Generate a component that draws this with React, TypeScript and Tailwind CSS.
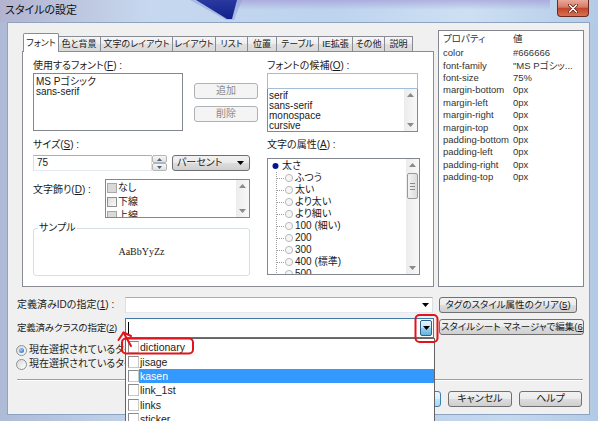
import React from "react";

const U = ({ children }: { children: React.ReactNode }) => (
  <span className="underline underline-offset-[1px] decoration-[1px]">{children}</span>
);

const Down = ({ c = "#000" }: { c?: string }) => (
  <svg width="7" height="4" viewBox="0 0 7 4">
    <path d="M0 0H7L3.5 4Z" fill={c} />
  </svg>
);
const Up = ({ c = "#000" }: { c?: string }) => (
  <svg width="7" height="4" viewBox="0 0 7 4">
    <path d="M0 4H7L3.5 0Z" fill={c} />
  </svg>
);

const btn =
  "flex items-center justify-center rounded-[3px] border border-[#707070] bg-[linear-gradient(#f2f2f2,#ebebeb_50%,#dddddd_50%,#cfcfcf)] leading-[12px] text-[#1a1a1a] shrink-0 whitespace-nowrap";
const dbtn =
  "flex items-center justify-center rounded-[3px] border border-[#adb2b5] bg-[#f4f4f4] text-[10px] leading-[12px] text-[#8a8a8a] shrink-0";
const tbox = "border border-[#abadb3] border-l-[#dbdfe6] border-r-[#dbdfe6] border-b-[#e3e9ef] bg-white";

function Scroll({ thumb = false }: { thumb?: boolean }) {
  return (
    <div className="w-[13px] shrink-0 self-stretch flex flex-col bg-[linear-gradient(90deg,#ececec,#f8f8f8)]">
      <div className="h-[12px] flex items-center justify-center">
        <Up c="#8a8a8a" />
      </div>
      {thumb && (
        <div className="mt-[2px] mx-[1px] h-[26px] rounded-[2px] border border-[#9a9a9a] bg-[linear-gradient(90deg,#f3f3f3,#dcdcdc)] flex flex-col items-center justify-center gap-[2px]">
          <div className="w-[5px] h-px bg-[#8a8a8a]" />
          <div className="w-[5px] h-px bg-[#8a8a8a]" />
          <div className="w-[5px] h-px bg-[#8a8a8a]" />
        </div>
      )}
      <div className="flex-1" />
      <div className="h-[12px] flex items-center justify-center">
        <Down c="#8a8a8a" />
      </div>
    </div>
  );
}

const Check = ({ gray = false }: { gray?: boolean }) => (
  <div
    className={
      gray
        ? "w-[10px] h-[10px] shrink-0 border border-[#a8a8a8] bg-[#d9d9d9]"
        : "w-[10px] h-[10px] shrink-0 border border-[#8e8f8f] bg-[linear-gradient(135deg,#dcdcdc,#fafafa)]"
    }
  />
);

const Radio = ({ on = false }: { on?: boolean }) => (
  <div className="w-[11px] h-[11px] shrink-0 rounded-full border border-[#8e8f8f] bg-[linear-gradient(135deg,#d8d8d8,#ffffff)] flex items-center justify-center">
    {on && <div className="w-[5px] h-[5px] rounded-full bg-[radial-gradient(circle_at_35%_35%,#9fd0ff,#1b5fb5)]" />}
  </div>
);

const TreeChild = ({ t }: { t: string }) => (
  <div className="h-[12px] flex items-center">
    <svg width="27" height="12" viewBox="0 0 27 12" className="shrink-0">
      <line x1="8.5" y1="0" x2="8.5" y2="12" stroke="#a0a0a0" strokeDasharray="1 1" />
      <line x1="9" y1="6.5" x2="17" y2="6.5" stroke="#a0a0a0" strokeDasharray="1 1" />
      <circle cx="21" cy="6" r="3.6" fill="#f6f6f6" stroke="#b9b9b9" />
    </svg>
    <span className="text-[10px] leading-[12px]">{t}</span>
  </div>
);

const tabs: [string, string][] = [
  ["色と背景", "w-[43px]"],
  ["文字のレイアウト", "w-[72px]"],
  ["レイアウト", "w-[43px]"],
  ["リスト", "w-[32px]"],
  ["位置", "w-[29px]"],
  ["テーブル", "w-[42px]"],
  ["IE拡張", "w-[34px]"],
  ["その他", "w-[32px]"],
  ["説明", "w-[29px] border-r"],
];

const props: [string, string][] = [
  ["color", "#666666"],
  ["font-family", "\"MS Pゴシッ..."],
  ["font-size", "75%"],
  ["margin-bottom", "0px"],
  ["margin-left", "0px"],
  ["margin-right", "0px"],
  ["margin-top", "0px"],
  ["padding-bottom", "0px"],
  ["padding-left", "0px"],
  ["padding-right", "0px"],
  ["padding-top", "0px"],
];

const classes = ["dictionary", "jisage", "kasen", "link_1st", "links", "sticker"];

export default function App() {
  return (
    <div className="relative w-[598px] h-[421px] overflow-hidden font-['Liberation_Sans','Noto_Sans_CJK_JP',sans-serif] [font-feature-settings:'palt'] text-[#1a1a1a] bg-[linear-gradient(90deg,#aebbd6,#c3d6ee_25%,#b9cfeb_60%,#c4d8ef_85%,#b3cae6)]">
      {/* title bar */}
      <div className="relative h-[22px] flex items-start">
        <svg className="absolute left-0 top-0" width="598" height="22" viewBox="0 0 598 22">
          <defs>
            <linearGradient id="tb" x1="0" y1="0" x2="1" y2="0">
              <stop offset="0" stopColor="#b2b3cf" />
              <stop offset="0.25" stopColor="#c6d8ef" />
              <stop offset="0.55" stopColor="#bdd3ee" />
              <stop offset="0.78" stopColor="#cde0f3" />
              <stop offset="1" stopColor="#b4cbe8" />
            </linearGradient>
            <linearGradient id="tp" x1="0" y1="0" x2="0" y2="1">
              <stop offset="0" stopColor="#9d92d2" stopOpacity="0.6" />
              <stop offset="1" stopColor="#9d92d2" stopOpacity="0" />
            </linearGradient>
            <linearGradient id="nv" x1="0" y1="0" x2="0" y2="1">
              <stop offset="0" stopColor="#2a38a0" />
              <stop offset="1" stopColor="#12208a" />
            </linearGradient>
          </defs>
          <rect width="598" height="22" fill="url(#tb)" />
          <rect x="220" y="0" width="330" height="10" fill="url(#tp)" />
          <polygon points="190,0 242,0 234,20 226,20" fill="#8aa0d8" opacity="0.5" />
          <polygon points="196,0 237,0 232,19 227,19" fill="url(#nv)" />
        </svg>
        <span className="relative ml-[5px] mt-[3px] text-[11px] leading-[15px] text-[#111]">スタイルの設定</span>
        <div className="relative ml-auto mr-[9px] w-[32px] h-[17px] rounded-b-[4px] border border-t-0 border-[#6b2a20] bg-[linear-gradient(#eaa999,#d47b66_45%,#c2442c_52%,#d9714f)] flex items-center justify-center">
          <svg width="10" height="9" viewBox="0 0 10 9">
            <path d="M1.5 1L8.5 8M8.5 1L1.5 8" stroke="#5a1a10" strokeWidth="3" strokeLinecap="round" />
            <path d="M1.5 1L8.5 8M8.5 1L1.5 8" stroke="#ffffff" strokeWidth="1.6" strokeLinecap="round" />
          </svg>
        </div>
      </div>

      {/* client area */}
      <div className="ml-[7px] w-[583px] h-[393px] border border-[#8ea3c0] bg-[#f0f0f0] flex flex-col">
        {/* top section */}
        <div className="flex pt-[7px]">
          <div className="ml-[14px] pt-[3px] w-[412px] flex flex-col">
            <div className="flex items-end h-[18px] pl-[1px]">
              <div className="relative z-10 -mb-px -mr-[2px] h-[19px] w-[36px] shrink-0 rounded-t-[2px] border border-b-0 border-[#898c95] bg-white flex items-center justify-center text-[9px] leading-[12px]">
                フォント
              </div>
              {tabs.map(([t, w]) => (
                <div
                  key={t}
                  className={`${w} h-[15px] shrink-0 border-l border-t border-[#898c95] bg-[linear-gradient(#f6f6f6,#ececec_50%,#dfdfdf_50%,#d9d9d9)] flex items-center justify-center text-[9px] leading-[12px] whitespace-nowrap`}
                >
                  {t}
                </div>
              ))}
            </div>
            <div className="h-[236px] w-[412px] border border-[#898c95] bg-white flex pl-[10px]">
              {/* left column */}
              <div className="w-[217px] shrink-0 flex flex-col">
                <div className="mt-[8px] h-[12px] text-[10px] leading-[12px]">
                  使用するフォント(<U>F</U>) :
                </div>
                <div className="mt-[1px] flex">
                  <div className="w-[150px] h-[58px] shrink-0 border border-[#828790] pt-[3px] pl-[2px] text-[10px] leading-[10px]">
                    <div>MS Pゴシック</div>
                    <div>sans-serif</div>
                  </div>
                  <div className="ml-[11px] pt-[10px] flex flex-col gap-[7px]">
                    <div className={`${dbtn} w-[64px] h-[16px]`}>追加</div>
                    <div className={`${dbtn} w-[64px] h-[16px]`}>削除</div>
                  </div>
                </div>
                <div className="mt-[8px] h-[12px] text-[10px] leading-[12px]">
                  サイズ(<U>S</U>) :
                </div>
                <div className="mt-[4px] flex h-[16px]">
                  <div className={`${tbox} w-[119px] h-[16px] shrink-0 pl-[3px] text-[10px] leading-[14px]`}>75</div>
                  <div className="w-[15px] h-[16px] shrink-0 flex flex-col">
                    <div className="h-[8px] rounded-[2px] border border-[#b5b5b5] bg-[linear-gradient(#f7f7f7,#e0e0e0)] flex items-center justify-center">
                      <svg width="5" height="3" viewBox="0 0 5 3">
                        <path d="M0 3H5L2.5 0Z" fill="#4d6185" />
                      </svg>
                    </div>
                    <div className="h-[8px] rounded-[2px] border border-[#b5b5b5] bg-[linear-gradient(#f7f7f7,#e0e0e0)] flex items-center justify-center">
                      <svg width="5" height="3" viewBox="0 0 5 3">
                        <path d="M0 0H5L2.5 3Z" fill="#4d6185" />
                      </svg>
                    </div>
                  </div>
                  <div className={`${btn} ml-[5px] w-[78px] h-[16px] justify-start pl-[4px] pr-[5px] text-[10px]`}>
                    <span>パーセント</span>
                    <span className="ml-auto flex">
                      <Down />
                    </span>
                  </div>
                </div>
                <div className="mt-[8px] flex h-[39px]">
                  <div className="pt-[5px] text-[10px] leading-[12px]">
                    文字飾り(<U>D</U>) :
                  </div>
                  <div className="ml-auto w-[145px] h-[39px] shrink-0 border border-[#828790] flex overflow-hidden">
                    <div className="flex-1 pl-[1px] pt-[1px]">
                      <div className="h-[14px] flex items-center gap-[1px]">
                        <Check gray />
                        <span className="text-[10px] leading-[12px]">なし</span>
                      </div>
                      <div className="h-[14px] flex items-center gap-[1px]">
                        <Check />
                        <span className="text-[10px] leading-[12px]">下線</span>
                      </div>
                      <div className="h-[14px] flex items-center gap-[1px]">
                        <Check gray />
                        <span className="text-[10px] leading-[12px]">上線</span>
                      </div>
                    </div>
                    <Scroll />
                  </div>
                </div>
                <div className="mt-[10px] h-[48px] w-[217px] rounded-[3px] border border-[#d5dfe5] flex flex-col">
                  <div className="-mt-[7px] ml-[4px] self-start bg-white px-[1px] text-[10px] leading-[12px]">サンプル</div>
                  <div className="mt-[12px] text-center font-['Liberation_Serif',serif] text-[10px] leading-[12px]">AaBbYyZz</div>
                </div>
              </div>
              {/* right column */}
              <div className="ml-[17px] w-[153px] shrink-0 flex flex-col">
                <div className="mt-[8px] h-[12px] text-[10px] leading-[12px]">
                  フォントの候補(<U>O</U>) :
                </div>
                <div className="mt-[1px] h-[16px] w-[151px] border border-[#a4bed8] bg-white" />
                <div className="h-[43px] w-[151px] border border-t-0 border-[#828790] flex overflow-hidden">
                  <div className="flex-1 pt-[2px] pl-[1px] text-[10px] leading-[10px]">
                    <div>serif</div>
                    <div>sans-serif</div>
                    <div>monospace</div>
                    <div>cursive</div>
                  </div>
                  <Scroll />
                </div>
                <div className="mt-[7px] h-[12px] text-[10px] leading-[12px]">
                  文字の属性(<U>A</U>) :
                </div>
                <div className="mt-[7px] h-[117px] w-[153px] border border-[#828790] flex overflow-hidden">
                  <div className="flex-1 pt-[1px]">
                    <div className="h-[12px] flex items-center">
                      <svg width="14" height="12" viewBox="0 0 14 12" className="shrink-0">
                        <circle cx="7.5" cy="6" r="3" fill="#0a148c" />
                      </svg>
                      <span className="text-[10px] leading-[12px]">太さ</span>
                    </div>
                    <TreeChild t="ふつう" />
                    <TreeChild t="太い" />
                    <TreeChild t="より太い" />
                    <TreeChild t="より細い" />
                    <TreeChild t="100 (細い)" />
                    <TreeChild t="200" />
                    <TreeChild t="300" />
                    <TreeChild t="400 (標準)" />
                    <TreeChild t="500" />
                  </div>
                  <Scroll thumb />
                </div>
              </div>
            </div>
          </div>

          {/* property panel */}
          <div className="ml-[4px] w-[146px] h-[257px] shrink-0 border border-[#828790] bg-white flex flex-col text-[9.5px] leading-[12px] text-[#333]">
            <div className="h-[16px] flex items-center">
              <div className="w-[74px] pl-[4px]">プロパティ</div>
              <div>値</div>
            </div>
            {props.map(([k, v]) => (
              <div key={k} className="h-[12.4px] flex items-center">
                <div className="w-[74px] pl-[4px] shrink-0 whitespace-nowrap">{k}</div>
                <div className="whitespace-nowrap">{v}</div>
              </div>
            ))}
          </div>
        </div>

        {/* bottom section */}
        <div className="pl-[9px] flex flex-col">
          <div className="mt-[10px] h-[16px] flex items-center">
            <div className="w-[108px] shrink-0 whitespace-nowrap text-[10px] leading-[12px]">
              定義済みIDの指定(<U>1</U>) :
            </div>
            <div className={`${tbox} w-[308px] h-[16px] shrink-0 flex items-center justify-end pr-[3px]`}>
              <Down />
            </div>
            <div className={`${btn} ml-[6px] w-[138px] h-[16px] text-[9.5px]`}>
              タグのスタイル属性のクリア(<U>5</U>)
            </div>
          </div>
          <div className="mt-[5px] h-[20px] flex items-start">
            <div className="w-[108px] shrink-0 self-center whitespace-nowrap text-[9.5px] leading-[12px] tracking-[-0.2px]">
              定義済みクラスの指定(<U>2</U>)
            </div>
            <div className="w-[309px] h-[20px] shrink-0 border border-[#3d7bad] bg-white flex items-center">
              <div className="ml-[2px] w-px h-[13px] bg-black" />
              <div className="ml-auto mr-px w-[12px] h-[16px] rounded-[2px] border border-[#2c628b] bg-[linear-gradient(#e5f4fc,#c4e5f6_50%,#98d1ef_50%,#68b3db)] flex items-center justify-center">
                <Down />
              </div>
            </div>
            <div className={`${btn} ml-[5px] mt-[1px] w-[145px] h-[16px] justify-start pl-[1px] overflow-hidden text-[9.5px]`}>
              スタイルシート マネージャで編集(<U>6</U>)
            </div>
          </div>
          <div className="mt-[5px] flex flex-col">
            <div className="h-[14px] flex items-center -ml-[1px]">
              <Radio on />
              <span className="ml-[2px] text-[10px] leading-[12px] whitespace-nowrap">現在選択されているタグに適用</span>
            </div>
            <div className="h-[14px] flex items-center -ml-[1px]">
              <Radio />
              <span className="ml-[2px] text-[10px] leading-[12px] whitespace-nowrap">現在選択されているタグの子要素に適用</span>
            </div>
          </div>
          <div className="mt-[8px] w-[566px] h-[2px] border-t border-b border-t-[#a0a0a0] border-b-white" />
          <div className="mt-[10px] flex justify-end pr-[7px] gap-[7px]">
            <div className="w-[64px] h-[16px] rounded-[3px] border border-[#3c7fb1] bg-[linear-gradient(#eaf6fd,#d9f0fc_50%,#bee6fd_50%,#a7d9f5)] flex items-center justify-center text-[10px] leading-[12px]">
              OK
            </div>
            <div className={`${btn} w-[64px] h-[16px] text-[10px]`}>キャンセル</div>
            <div className={`${btn} w-[63px] h-[16px] text-[10px]`}>ヘルプ</div>
          </div>
        </div>
      </div>

      {/* dropdown list */}
      <div className="absolute left-[125px] top-[338px] w-[310px] h-[90px] border border-[#646464] bg-white pt-px">
        {classes.map((t) => (
          <div key={t} className="h-[14.4px] flex items-center">
            <div className="ml-[2px] w-[11px] h-[12px] shrink-0 border border-[#8a8a8a] border-b-[#c8c8c8] border-r-[#c8c8c8] bg-white" />
            <div
              className={
                t === "kasen"
                  ? "h-full flex-1 flex items-center pl-[1px] text-[10.5px] leading-[12px] bg-[#3399ff] text-white"
                  : "h-full flex-1 flex items-center pl-[1px] text-[10.5px] leading-[12px] text-[#222]"
              }
            >
              {t}
            </div>
          </div>
        ))}
      </div>

      {/* red annotations */}
      <svg className="absolute left-0 top-0 pointer-events-none" width="598" height="421" viewBox="0 0 598 421">
        <rect x="122" y="338.5" width="71" height="15" rx="4" fill="none" stroke="#e3131b" strokeWidth="2" />
        <rect x="415.5" y="315" width="22" height="27" rx="4" fill="none" stroke="#e3131b" strokeWidth="2" />
        <polyline points="118.5,340 123.5,332.5 131,336" fill="none" stroke="#e3131b" strokeWidth="2" strokeLinejoin="round" strokeLinecap="round" />
        <line x1="123.5" y1="332.5" x2="131" y2="346" stroke="#e3131b" strokeWidth="2" strokeLinecap="round" />
      </svg>
    </div>
  );
}
